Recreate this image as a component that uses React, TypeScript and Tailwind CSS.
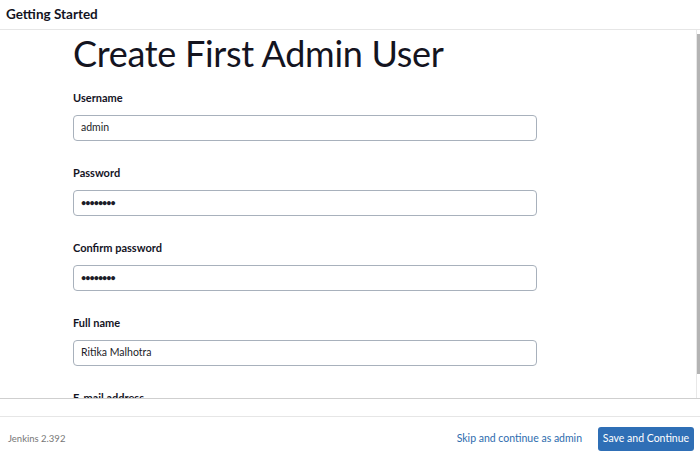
const FONT = { fontFamily: 'Lato, "Noto Sans", sans-serif' };

function Field({ label, value, password }: { label: string; value: string; password?: boolean }) {
  return (
    <div className="mb-[24px]">
      <p className="text-[11px] font-bold leading-[16px] text-[#14141f]">{label}</p>
      <div className="mt-[9px] flex h-[26px] w-[464px] items-center rounded-[4px] border border-[#a8b1bc] px-[7px] text-[10.5px] text-[#1c1c28]">
        {password ? <span className="text-[9px] font-bold tracking-[-1px]">••••••••</span> : value}
      </div>
    </div>
  );
}

export default function App() {
  return (
    <div className="flex h-[456px] w-[700px] flex-col overflow-hidden bg-white" style={FONT}>
      {/* top bar */}
      <div className="flex h-[30px] shrink-0 items-center border-b border-[#e6e6e6] px-[6px]">
        <span className="text-[13.5px] font-bold text-[#14141f]">Getting Started</span>
      </div>

      {/* scrolling form */}
      <div className="flex h-[369px] shrink-0 overflow-hidden border-b border-[#cfcfcf]">
        <div className="flex-1 pl-[73px]">
          <h1 className="text-[36px] leading-[46px] tracking-[-0.3px] text-[#14141f]">Create First Admin User</h1>
          <div className="mt-[14px]">
            <Field label="Username" value="admin" />
            <Field label="Password" value="" password />
            <Field label="Confirm password" value="" password />
            <Field label="Full name" value="Ritika Malhotra" />
            <p className="text-[11px] font-bold leading-[16px] text-[#14141f]">E-mail address</p>
          </div>
        </div>
        <div className="flex w-[4px] flex-col border-l border-[#e8e8e8]">
          <div className="mt-[4px] h-[340px] w-[3px] bg-[#b4b4b4]" />
        </div>
      </div>

      <div className="h-[18px] shrink-0 border-b border-[#e6e6e6]" />

      {/* footer */}
      <div className="flex flex-1 items-center justify-between pl-[8px] pr-[6px] pt-[5px]">
        <span className="text-[9.5px] text-[#777]">Jenkins 2.392</span>
        <div className="flex items-center gap-[16px]">
          <span className="text-[10.5px] text-[#2d6cae]">Skip and continue as admin</span>
          <button className="h-[24px] w-[96px] whitespace-nowrap rounded-[3px] bg-[#2f6fb6] text-[10.5px] text-white">
            Save and Continue
          </button>
        </div>
      </div>
    </div>
  );
}
